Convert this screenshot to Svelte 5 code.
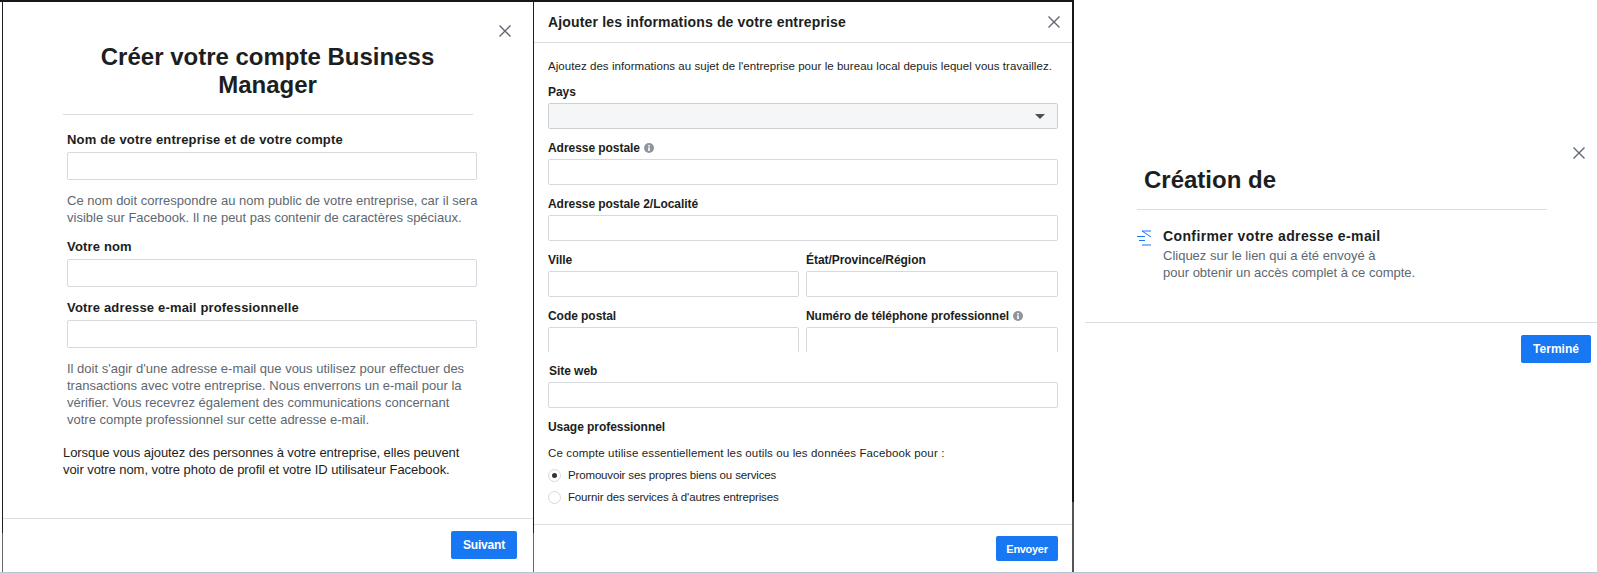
<script>
	// Radio choices in the business usage block
	const usages = [
		{ label: 'Promouvoir ses propres biens ou services', checked: true },
		{ label: "Fournir des services à d'autres entreprises", checked: false }
	];
</script>

<main class="page">
	<div class="frame">
		<div class="rule first"></div>

		<!-- Business Manager account -->
		<section class="sheet account">
			<button class="close" type="button" aria-label="Fermer">
				<svg width="12" height="12" viewBox="0 0 12 12"><path d="M.5.5l11 11M11.500.5l-11 11" /></svg>
			</button>
			<h1>Créer votre compte Business Manager</h1>
			<div class="form">
				<label class="lbl" for="biz">Nom de votre entreprise et de votre compte</label>
				<input id="biz" type="text" />
				<p class="help one">
					Ce nom doit correspondre au nom public de votre entreprise, car il sera visible sur
					Facebook. Il ne peut pas contenir de caractères spéciaux.
				</p>
				<label class="lbl two" for="yourname">Votre nom</label>
				<input id="yourname" type="text" />
				<label class="lbl three" for="mail">Votre adresse e-mail professionnelle</label>
				<input id="mail" type="text" />
				<p class="help four">
					Il doit s'agir d'une adresse e-mail que vous utilisez pour effectuer des transactions avec
					votre entreprise. Nous enverrons un e-mail pour la vérifier. Vous recevrez également des
					communications concernant votre compte professionnel sur cette adresse e-mail.
				</p>
			</div>
			<p class="notice">
				Lorsque vous ajoutez des personnes à votre entreprise, elles peuvent voir votre nom, votre
				photo de profil et votre ID utilisateur Facebook.
			</p>
			<footer class="foot">
				<button class="primary next" type="button">Suivant</button>
			</footer>
		</section>

		<div class="rule second"></div>

		<!-- Business details -->
		<section class="sheet details">
			<header class="head">
				<h2>Ajouter les informations de votre entreprise</h2>
				<button class="close inline" type="button" aria-label="Fermer">
					<svg width="12" height="12" viewBox="0 0 12 12"><path d="M.5.5l11 11M11.500.5l-11 11" /></svg>
				</button>
			</header>
			<div class="fields">
				<p class="intro">
					Ajoutez des informations au sujet de l'entreprise pour le bureau local depuis lequel vous
					travaillez.
				</p>
				<div class="lbl small">Pays</div>
				<div class="select"><span class="caret"></span></div>
				<div class="lbl small gap">
					Adresse postale
					<svg class="info" width="10" height="10" viewBox="0 0 10 10">
						<circle cx="5" cy="5" r="5" />
						<path d="M4.200 2h1.600v1.400H4.200zM4.200 4.200h1.600V8H4.200z" />
					</svg>
				</div>
				<input class="box" type="text" />
				<div class="lbl small gap">Adresse postale 2/Localité</div>
				<input class="box" type="text" />
				<div class="cols">
					<div>
						<div class="lbl small gap">Ville</div>
						<input class="box" type="text" />
					</div>
					<div>
						<div class="lbl small gap">État/Province/Région</div>
						<input class="box" type="text" />
					</div>
					<div>
						<div class="lbl small gap">Code postal</div>
						<div class="cut"><input class="box" type="text" /></div>
					</div>
					<div>
						<div class="lbl small gap">
							Numéro de téléphone professionnel
							<svg class="info" width="10" height="10" viewBox="0 0 10 10">
								<circle cx="5" cy="5" r="5" />
								<path d="M4.200 2h1.600v1.400H4.200zM4.200 4.200h1.600V8H4.200z" />
							</svg>
						</div>
						<div class="cut"><input class="box" type="text" /></div>
					</div>
				</div>
				<div class="lbl small site">Site web</div>
				<input class="box" type="text" />
				<div class="lbl small usage">Usage professionnel</div>
				<p class="intro tool">Ce compte utilise essentiellement les outils ou les données Facebook pour :</p>
				{#each usages as usage}
					<div class="radio-row">
						<span class="radio" class:on={usage.checked}></span>
						<span>{usage.label}</span>
					</div>
				{/each}
			</div>
			<footer class="foot">
				<button class="primary send" type="button">Envoyer</button>
			</footer>
		</section>

		<div class="rule third"></div>
	</div>

	<!-- Confirmation -->
	<section class="sheet done">
		<button class="close last" type="button" aria-label="Fermer">
			<svg width="12" height="12" viewBox="0 0 12 12"><path d="M.5.5l11 11M11.500.5l-11 11" /></svg>
		</button>
		<div class="done-body">
			<h1 class="created">Création de</h1>
			<div class="step">
				<svg class="step-icon" width="15" height="16" viewBox="0 0 15 16">
					<path d="M5 1h9M5 1l9 6M0 6.500h8M2 10.500h6M5 15h9" />
				</svg>
				<div>
					<h3>Confirmer votre adresse e-mail</h3>
					<p class="help">
						Cliquez sur le lien qui a été envoyé à<br />pour obtenir un accès complet à ce compte.
					</p>
				</div>
			</div>
		</div>
		<footer class="foot done-foot">
			<button class="primary finish" type="button">Terminé</button>
		</footer>
	</section>
</main>

<style>
	:global(body) {
		margin: 0;
		background: #fff;
	}

	.page {
		display: flex;
		width: 1597px;
		height: 573px;
		box-sizing: border-box;
		border-bottom: 1px solid #b9c4d6;
		overflow: hidden;
		font-family: 'Liberation Sans', Arial, sans-serif;
		color: #1c1e21;
	}

	.frame {
		display: flex;
		width: 1074px;
		flex: none;
		padding-left: 2px;
		box-sizing: border-box;
		border-top: 2px solid #14171c;
	}

	.rule {
		flex: none;
		width: 1px;
		background: linear-gradient(#1c1e21 531px, #6a6a6a 531px);
	}

	.rule.third {
		width: 2px;
		background: linear-gradient(#14171c 500px, #555 500px);
	}

	.sheet {
		position: relative;
		display: flex;
		flex-direction: column;
		min-width: 0;
	}

	.account {
		width: 530px;
		flex: none;
	}

	.details {
		flex: 1;
	}

	.done {
		flex: 1;
	}

	.close {
		position: absolute;
		top: 23px;
		right: 22px;
		display: flex;
		padding: 0;
		border: 0;
		background: none;
	}

	.close path {
		fill: none;
		stroke: #606770;
		stroke-width: 1.4;
	}

	.close.inline {
		position: static;
	}

	.close.last {
		top: 147px;
		right: 12px;
	}

	h1 {
		margin: 41px 60px 0;
		padding: 0 1px 15px 0;
		border-bottom: 1px solid #dadde1;
		font-size: 24px;
		line-height: 28px;
		font-weight: 700;
		text-align: center;
	}

	.form {
		margin: 0 56px 0 64px;
		display: flex;
		flex-direction: column;
	}

	.lbl {
		display: block;
		font-size: 13px;
		line-height: 16px;
		font-weight: 700;
		letter-spacing: 0.17px;
	}

	.form .lbl:first-child {
		margin-top: 17px;
	}

	.lbl.two {
		margin-top: 13px;
	}

	.lbl.three {
		margin-top: 13px;
	}

	input {
		display: block;
		width: 100%;
		height: 28px;
		margin: 4px 0 0;
		padding: 0 8px;
		box-sizing: border-box;
		border: 1px solid #d6d9dd;
		border-radius: 2px;
		background: #fff;
	}

	.help {
		margin: 0;
		font-size: 13px;
		line-height: 17px;
		color: #606770;
	}

	.help.one {
		margin: 12px -6px 0 0;
	}

	.help.four {
		margin-top: 12px;
	}

	.notice {
		margin: 16px 60px 0;
		font-size: 13px;
		line-height: 17px;
		letter-spacing: -0.07px;
	}

	.foot {
		display: flex;
		justify-content: flex-end;
		margin-top: auto;
		border-top: 1px solid #dadde1;
	}

	.primary {
		border: 0;
		border-radius: 2px;
		background: #1877f2;
		color: #fff;
		font-family: inherit;
		font-size: 12px;
		font-weight: 700;
	}

	.next {
		width: 66px;
		height: 28px;
		margin: 12px 16px 13px 0;
		letter-spacing: -0.2px;
	}

	.head {
		display: flex;
		justify-content: space-between;
		align-items: center;
		height: 40px;
		padding: 0 12px 0 14px;
		border-bottom: 1px solid #dadde1;
	}

	h2 {
		margin: 0;
		font-size: 14px;
		font-weight: 700;
		letter-spacing: 0.16px;
	}

	.fields {
		padding: 0 14px;
	}

	.intro {
		margin: 0;
		font-size: 11.500px;
		line-height: 16px;
		letter-spacing: 0.05px;
		white-space: nowrap;
	}

	.fields > .intro:first-child {
		margin-top: 15px;
	}

	.small {
		font-size: 12px;
		margin-top: 10px;
		letter-spacing: -0.05px;
	}

	.gap {
		margin-top: 11px;
	}

	.info {
		vertical-align: -1px;
		margin-left: 1px;
	}

	.info circle {
		fill: #90949c;
	}

	.info path {
		fill: #fff;
	}

	.select {
		display: flex;
		align-items: center;
		justify-content: flex-end;
		height: 26px;
		margin-top: 3px;
		padding-right: 12px;
		box-sizing: border-box;
		border: 1px solid #ccd0d5;
		border-radius: 2px;
		background: #f5f6f7;
	}

	.caret {
		width: 0;
		height: 0;
		border-left: 5px solid transparent;
		border-right: 5px solid transparent;
		border-top: 5px solid #4b4f56;
	}

	.box {
		height: 26px;
		margin-top: 3px;
	}

	.cols {
		display: grid;
		grid-template-columns: 251px 252px;
		column-gap: 7px;
	}

	.cut {
		height: 25px;
		margin-top: 3px;
		overflow: hidden;
	}

	.cut .box {
		margin-top: 0;
		height: 32px;
	}

	.site {
		margin-top: 11px;
		margin-left: 1px;
	}

	.usage {
		margin-top: 11px;
	}

	.tool {
		margin-top: 10px;
		margin-bottom: 3px;
		letter-spacing: 0.13px;
	}

	.radio-row {
		display: flex;
		align-items: center;
		gap: 7px;
		height: 22px;
		font-size: 11.500px;
		letter-spacing: -0.15px;
		color: #1c1e21;
	}

	.radio {
		display: flex;
		align-items: center;
		justify-content: center;
		width: 13px;
		height: 13px;
		box-sizing: border-box;
		border: 1px solid #d6d9dd;
		border-radius: 50%;
	}

	.radio.on::after {
		content: '';
		width: 5px;
		height: 5px;
		border-radius: 50%;
		background: #333;
	}

	.send {
		width: 62px;
		height: 25px;
		margin: 11px 14px 11px 0;
		font-size: 11px;
		letter-spacing: -0.3px;
	}

	.done-body {
		margin: 0 50px 0 63px;
		height: 322px;
		box-sizing: border-box;
	}

	.created {
		margin: 166px 0 0 0;
		padding: 0 0 15px 7px;
		text-align: left;
	}

	.step {
		display: flex;
		gap: 11px;
		margin-top: 18px;
	}

	.step-icon {
		flex: none;
		margin-top: 2px;
	}

	.step-icon path {
		fill: none;
		stroke: #1877f2;
		stroke-width: 1;
	}

	h3 {
		margin: 0 0 3px;
		font-size: 14px;
		line-height: 16px;
		font-weight: 700;
		letter-spacing: 0.38px;
	}

	.done-foot {
		margin: 0 0 0 11px;
	}

	.finish {
		width: 70px;
		height: 28px;
		margin: 12px 6px 0 0;
	}
</style>
